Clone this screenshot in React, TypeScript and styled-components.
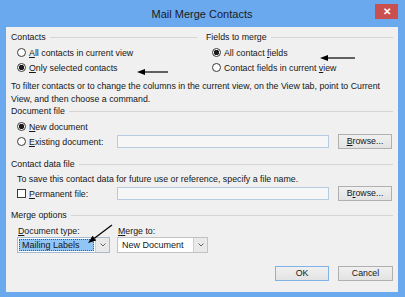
import React from "react";
import styled, { createGlobalStyle } from "styled-components";

const GlobalStyle = createGlobalStyle`
  html, body {
    margin: 0;
    padding: 0;
    background: #ffffff;
  }
  body {
    font-family: "Liberation Sans", Arial, sans-serif;
  }
`;

const Window = styled.div`
  position: relative;
  width: 405px;
  height: 297px;
  box-sizing: border-box;
  padding: 0 7px 5px 6px;
  background: #6ba9ef;
  display: flex;
  flex-direction: column;
  font-family: "Liberation Sans", Arial, sans-serif;
  font-size: 8.8px;
  color: #161616;
`;

const TitleBar = styled.div`
  height: 27px;
  flex: none;
  display: grid;
  grid-template-columns: 1fr auto 1fr;
  align-items: start;
`;

const Title = styled.div`
  grid-column: 2;
  font-size: 11px;
  line-height: 28px;
  color: #1a1a1a;
`;

const CloseButton = styled.div`
  grid-column: 3;
  justify-self: end;
  margin-top: 4px;
  width: 23px;
  height: 15px;
  background: #c9504f;
  color: #ffffff;
  font-size: 10px;
  font-weight: bold;
  line-height: 15px;
  text-align: center;
`;

const Panel = styled.div`
  flex: 1;
  background: #f0f0f0;
  padding: 5px 5px 0 5px;
  display: flex;
  flex-direction: column;
`;

const Columns = styled.div`
  display: grid;
  grid-template-columns: 186px 1fr;
  column-gap: 9px;
`;

const GroupHeader = styled.div<{ $top?: number }>`
  display: flex;
  align-items: center;
  gap: 4px;
  height: 10px;
  line-height: 10px;
  margin-top: ${(p) => p.$top ?? 0}px;
`;

const GroupLine = styled.div`
  flex: 1;
  height: 1px;
  background: #d5d5d5;
`;

const Options = styled.div`
  margin-top: 3px;
  display: flex;
  flex-direction: column;
`;

const OptionRow = styled.label`
  display: flex;
  align-items: center;
  gap: 3px;
  height: 15px;
  padding-left: 6px;
`;

const Radio = styled.span<{ $checked?: boolean }>`
  flex: none;
  width: 9px;
  height: 9px;
  box-sizing: border-box;
  border: 1px solid #3a3a3a;
  border-radius: 50%;
  background: ${(p) =>
    p.$checked
      ? "radial-gradient(circle, #1c1c1c 0, #1c1c1c 2.5px, #fff 3px)"
      : "#ffffff"};
`;

const Checkbox = styled.span`
  flex: none;
  width: 9px;
  height: 9px;
  box-sizing: border-box;
  border: 1px solid #3a3a3a;
  background: #ffffff;
`;

const Key = styled.span`
  text-decoration: underline;
  text-underline-offset: 1px;
`;

const Note = styled.p<{ $indent?: number; $top?: number }>`
  margin: ${(p) => p.$top ?? 0}px 0 0 ${(p) => p.$indent ?? 0}px;
  line-height: 13px;
  white-space: nowrap;
`;

const FileRow = styled.div`
  display: flex;
  align-items: center;
  height: 15px;
  padding-left: 6px;
`;

const FileChoice = styled.label`
  flex: none;
  width: 100px;
  display: flex;
  align-items: center;
  gap: 3px;
`;

const PathInput = styled.div`
  width: 212px;
  height: 13px;
  box-sizing: border-box;
  border: 1px solid #b7cbe0;
  background: #f6f6f6;
`;

const Button = styled.div<{ $width?: number; $default?: boolean }>`
  flex: none;
  width: ${(p) => p.$width ?? 54}px;
  height: 15px;
  box-sizing: border-box;
  border: 1px solid ${(p) => (p.$default ? "#7fb3e6" : "#b0b0b0")};
  background: linear-gradient(#f0f0f0, #e3e3e3);
  line-height: 13px;
  text-align: center;
`;

const BrowseButton = styled(Button)`
  margin-left: 9px;
`;

const MergeGrid = styled.div`
  margin-top: 5px;
  padding-left: 6px;
  display: grid;
  grid-template-columns: 93px 91px;
  column-gap: 7px;
`;

const FieldLabel = styled.div`
  height: 12px;
  line-height: 12px;
  padding-left: 1px;
`;

const Select = styled.div<{ $focused?: boolean }>`
  height: 16px;
  box-sizing: border-box;
  border: 1px solid ${(p) => (p.$focused ? "#a9b9cc" : "#c2c2c2")};
  background: #ffffff;
  display: flex;
`;

const SelectValue = styled.div<{ $focused?: boolean }>`
  flex: 1;
  margin: 1px;
  padding-left: 3px;
  line-height: 12px;
  font-size: 9px;
  box-sizing: border-box;
  background: ${(p) => (p.$focused ? "#91c5f5" : "transparent")};
  outline: ${(p) => (p.$focused ? "1px dotted #556" : "none")};
  outline-offset: -1px;
`;

const SelectArrow = styled.div`
  flex: none;
  width: 13px;
  border-left: 1px solid #cfcfcf;
  background: #e9e9e9;
  display: flex;
  align-items: center;
  justify-content: center;
`;

const Footer = styled.div`
  margin-top: 13px;
  display: flex;
  justify-content: flex-end;
  gap: 9px;
`;

const Annotations = styled.svg`
  position: absolute;
  left: 0;
  top: 0;
  pointer-events: none;
`;

function Chevron() {
  return (
    <svg width="6" height="4" viewBox="0 0 6 4">
      <path d="M0.5 0.5 L3 3 L5.5 0.5" fill="none" stroke="#666" strokeWidth="1" />
    </svg>
  );
}

function Arrow({ x1, y1, x2, y2 }: { x1: number; y1: number; x2: number; y2: number }) {
  // tip at (x2, y2)
  const a = Math.atan2(y2 - y1, x2 - x1);
  const len = 8;
  const w = 3;
  const bx = x2 - Math.cos(a) * len;
  const by = y2 - Math.sin(a) * len;
  const px = -Math.sin(a) * w;
  const py = Math.cos(a) * w;
  return (
    <g>
      <line x1={x1} y1={y1} x2={bx} y2={by} stroke="#000" strokeWidth="1.2" />
      <polygon
        points={`${x2},${y2} ${bx + px},${by + py} ${bx - px},${by - py}`}
        fill="#000"
      />
    </g>
  );
}

export default function App() {
  return (
    <>
      <GlobalStyle />
      <Window>
        <TitleBar>
          <Title>Mail Merge Contacts</Title>
          <CloseButton>✕</CloseButton>
        </TitleBar>
        <Panel>
          <Columns>
            <div>
              <GroupHeader>
                <span>Contacts</span>
                <GroupLine />
              </GroupHeader>
              <Options>
                <OptionRow>
                  <Radio />
                  <span>
                    <Key>A</Key>ll contacts in current view
                  </span>
                </OptionRow>
                <OptionRow>
                  <Radio $checked />
                  <span>
                    <Key>O</Key>nly selected contacts
                  </span>
                </OptionRow>
              </Options>
            </div>
            <div>
              <GroupHeader>
                <span>Fields to merge</span>
                <GroupLine />
              </GroupHeader>
              <Options>
                <OptionRow>
                  <Radio $checked />
                  <span>
                    All contact <Key>f</Key>ields
                  </span>
                </OptionRow>
                <OptionRow>
                  <Radio />
                  <span>
                    Contact fields in current <Key>v</Key>iew
                  </span>
                </OptionRow>
              </Options>
            </div>
          </Columns>

          <Note $top={5}>
            To filter contacts or to change the columns in the current view, on the View tab, point to Current
            <br />
            View, and then choose a command.
          </Note>

          <GroupHeader>
            <span>Document file</span>
            <GroupLine />
          </GroupHeader>
          <Options>
            <OptionRow>
              <Radio $checked />
              <span>
                <Key>N</Key>ew document
              </span>
            </OptionRow>
            <FileRow>
              <FileChoice>
                <Radio />
                <span>
                  <Key>E</Key>xisting document:
                </span>
              </FileChoice>
              <PathInput />
              <BrowseButton>
                <Key>B</Key>rowse...
              </BrowseButton>
            </FileRow>
          </Options>

          <GroupHeader $top={10}>
            <span>Contact data file</span>
            <GroupLine />
          </GroupHeader>
          <Note $indent={6} $top={4}>
            To save this contact data for future use or reference, specify a file name.
          </Note>
          <FileRow>
            <FileChoice>
              <Checkbox />
              <span>
                <Key>P</Key>ermanent file:
              </span>
            </FileChoice>
            <PathInput />
            <BrowseButton>
              B<Key>r</Key>owse...
            </BrowseButton>
          </FileRow>

          <GroupHeader $top={9}>
            <span>Merge options</span>
            <GroupLine />
          </GroupHeader>
          <MergeGrid>
            <FieldLabel>
              <Key>D</Key>ocument type:
            </FieldLabel>
            <FieldLabel>
              <Key>M</Key>erge to:
            </FieldLabel>
            <Select $focused>
              <SelectValue $focused>Mailing Labels</SelectValue>
              <SelectArrow>
                <Chevron />
              </SelectArrow>
            </Select>
            <Select>
              <SelectValue>New Document</SelectValue>
              <SelectArrow>
                <Chevron />
              </SelectArrow>
            </Select>
          </MergeGrid>

          <Footer>
            <Button $default>OK</Button>
            <Button $width={55}>Cancel</Button>
          </Footer>
        </Panel>

        <Annotations width="405" height="297" viewBox="0 0 405 297">
          <Arrow x1={168} y1={72} x2={137} y2={72} />
          <Arrow x1={355} y1={58} x2={320} y2={58} />
          <Arrow x1={112} y1={225} x2={88} y2={243} />
        </Annotations>
      </Window>
    </>
  );
}
